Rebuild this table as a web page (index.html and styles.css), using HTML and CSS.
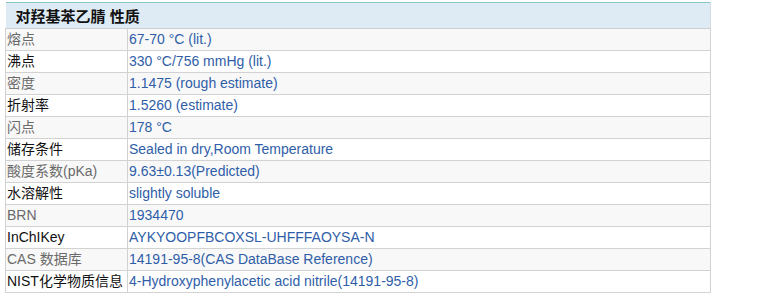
FILE: index.html
```html
<!DOCTYPE html>
<html lang="zh">
<head>
<meta charset="utf-8">
<link rel="stylesheet" href="styles.css">
</head>
<body>
<table class="props">
  <colgroup><col class="ck"><col class="cv"></colgroup>
  <thead>
    <tr><th colspan="2" class="title">对羟基苯乙腈 性质</th></tr>
  </thead>
  <tbody>
    <tr class="odd"><td class="k">熔点</td><td class="v">67-70 °C (lit.)</td></tr>
    <tr><td class="k">沸点</td><td class="v">330 °C/756 mmHg (lit.)</td></tr>
    <tr class="odd"><td class="k">密度</td><td class="v">1.1475 (rough estimate)</td></tr>
    <tr><td class="k">折射率</td><td class="v">1.5260 (estimate)</td></tr>
    <tr class="odd"><td class="k">闪点</td><td class="v">178 °C</td></tr>
    <tr><td class="k">储存条件</td><td class="v">Sealed in dry,Room Temperature</td></tr>
    <tr class="odd"><td class="k">酸度系数(pKa)</td><td class="v">9.63±0.13(Predicted)</td></tr>
    <tr><td class="k">水溶解性</td><td class="v">slightly soluble</td></tr>
    <tr class="odd"><td class="k">BRN</td><td class="v">1934470</td></tr>
    <tr><td class="k">InChIKey</td><td class="v">AYKYOOPFBCOXSL-UHFFFAOYSA-N</td></tr>
    <tr class="odd"><td class="k">CAS 数据库</td><td class="v">14191-95-8(CAS DataBase Reference)</td></tr>
    <tr><td class="k">NIST化学物质信息</td><td class="v">4-Hydroxyphenylacetic acid nitrile(14191-95-8)</td></tr>
  </tbody>
</table>
</body>
</html>
```
FILE: styles.css
```css
html, body {
  margin: 0;
  padding: 0;
  background: #ffffff;
}
body {
  padding: 2px 0 0 5px;
  font-family: "Liberation Sans", Arial, "Noto Sans CJK SC", sans-serif;
  font-size: 14px;
}
.props {
  width: 706px;
  border-collapse: collapse;
  table-layout: fixed;
}
.props .ck {
  width: 122px;
}
.props .title {
  height: 25px;
  padding: 0 0 0 10px;
  text-align: left;
  font-size: 15px;
  font-weight: bold;
  color: #111;
  background: #deebf4;
  border-top: 1px solid #86c8c6;
  border-right: 1px solid #d6dde2;
  border-bottom: 1px solid #cfcfcf;
  vertical-align: middle;
}
.props td {
  height: 21px;
  padding: 0 0 0 1px;
  border: 1px solid #d2d2d2;
  vertical-align: middle;
  white-space: nowrap;
  overflow: hidden;
  line-height: 21px;
}
.props td.k {
  color: #111;
}
.props tr.odd td {
  background: #f8f8f8;
}
.props tr.odd td.k {
  color: #6a6a6a;
}
.props td.v {
  color: #2f5ea8;
}
```
